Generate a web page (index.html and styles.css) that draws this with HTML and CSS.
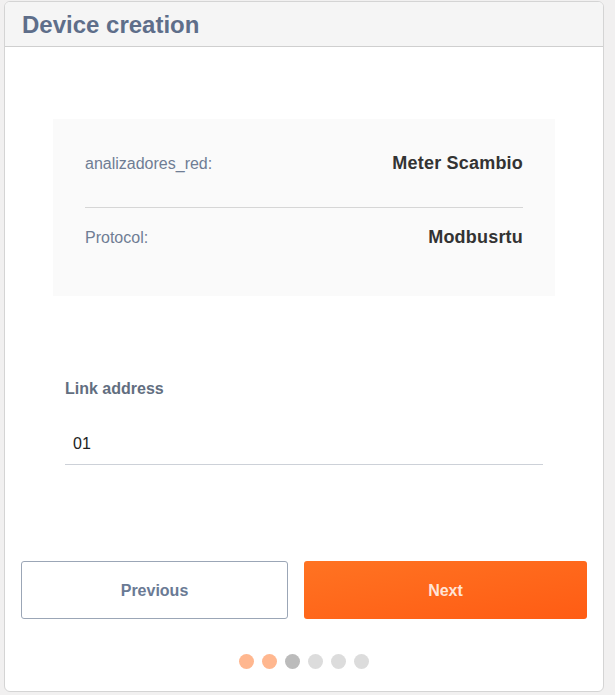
FILE: index.html
```html
<!DOCTYPE html>
<html>
<head>
<meta charset="utf-8">
<link rel="stylesheet" href="styles.css">
</head>
<body>
<div class="card">
  <div class="card-header"><h1 class="title">Device creation</h1></div>
  <div class="card-body">
    <div class="summary">
      <div class="row row-first">
        <span class="label">analizadores_red:</span>
        <span class="value">Meter Scambio</span>
      </div>
      <div class="row row-second">
        <span class="label">Protocol:</span>
        <span class="value">Modbusrtu</span>
      </div>
    </div>
    <div class="field">
      <label class="field-label">Link address</label>
      <div class="input">01</div>
    </div>
    <div class="actions">
      <button class="btn btn-prev">Previous</button>
      <button class="btn btn-next">Next</button>
    </div>
    <div class="dots">
      <span class="dot done"></span>
      <span class="dot done"></span>
      <span class="dot current"></span>
      <span class="dot"></span>
      <span class="dot"></span>
      <span class="dot"></span>
    </div>
  </div>
</div>
</body>
</html>
```
FILE: styles.css
```css
html, body {
  margin: 0;
  padding: 0;
  background: #f1f0f0;
  font-family: "Liberation Sans", Arial, sans-serif;
}
body {
  padding: 1px 0 0 4px;
}
.card {
  width: 598px;
  height: 689px;
  background: #ffffff;
  border: 1px solid #d4d4d4;
  border-radius: 6px;
  overflow: hidden;
  display: flex;
  flex-direction: column;
}
.card-header {
  height: 44px;
  background: #f5f5f5;
  border-bottom: 1px solid #cfcfcf;
  display: flex;
  align-items: center;
  padding-left: 17px;
}
.title {
  margin: 2px 0 0;
  font-size: 24px;
  font-weight: bold;
  color: #5e6e8a;
  line-height: 28px;
}
.card-body {
  display: flex;
  flex-direction: column;
}
.summary {
  margin: 72px 0 0 48px;
  width: 502px;
  height: 177px;
  background: #fafafa;
  box-sizing: border-box;
  padding: 0 32px;
}
.row {
  display: flex;
  justify-content: space-between;
  align-items: baseline;
  line-height: 20px;
}
.row-first {
  padding: 34px 0 33px;
  border-bottom: 1px solid #d6d6d6;
}
.row-second {
  padding-top: 19px;
}
.label {
  font-size: 16px;
  color: #6f7d94;
}
.value {
  font-size: 18px;
  font-weight: bold;
  color: #333333;
  letter-spacing: 0.2px;
}
.field {
  margin: 84px 0 0 60px;
  width: 478px;
  display: flex;
  flex-direction: column;
}
.field-label {
  font-size: 16px;
  font-weight: bold;
  color: #626e80;
  line-height: 18px;
}
.input {
  margin-top: 26px;
  height: 40px;
  line-height: 40px;
  padding-left: 8px;
  font-size: 16px;
  color: #222222;
  border-bottom: 1px solid #cdd1d8;
}
.actions {
  margin: 96px 0 0 16px;
  display: grid;
  grid-template-columns: 267px 283px;
  column-gap: 16px;
}
.btn {
  height: 58px;
  font-family: "Liberation Sans", Arial, sans-serif;
  font-size: 16px;
  font-weight: bold;
  border-radius: 3px;
  cursor: pointer;
  padding: 2px 0 0;
}
.btn-prev {
  background: #ffffff;
  border: 1px solid #9ba6b6;
  color: #6a7a94;
}
.btn-next {
  background: linear-gradient(170deg, #ff7322 0%, #ff5c14 100%);
  border: none;
  color: #ffe4d6;
}
.dots {
  margin-top: 35px;
  display: flex;
  justify-content: center;
  gap: 8px;
}
.dot {
  width: 15px;
  height: 15px;
  border-radius: 50%;
  background: #dcdcdc;
}
.dot.done {
  background: #ffb78f;
}
.dot.current {
  background: #bbbbbb;
}
```
